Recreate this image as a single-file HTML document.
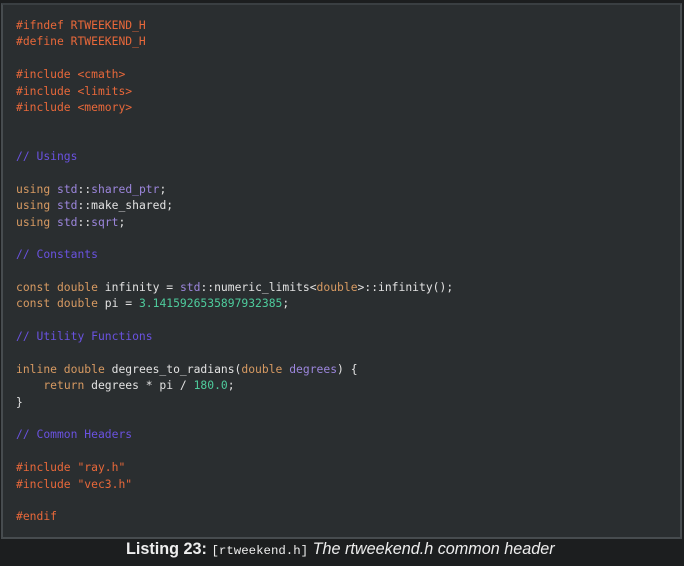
<!DOCTYPE html><html><head><style>
body{margin:0;background:#1c1e1f;width:684px;height:566px;overflow:hidden}
.box{position:absolute;left:1px;top:3px;width:677px;height:532px;background:#2a2e30;border:2px solid #474c4f;border-top-color:#3a3f42}
pre{margin:0;position:absolute;left:13px;top:12px;font:11.35px/16.37px "DejaVu Sans Mono",monospace;color:#e2e2e2}
.p{color:#e8683a}.k{color:#d79a62}.c{color:#6a52e0}.s{color:#9c86dc}.n{color:#4ecb9c}
.cap{position:absolute;top:540px;left:126px;font:16.2px "Liberation Sans",sans-serif;color:#eee;white-space:nowrap}
.cap b{font-weight:bold}.cap code{font:12.4px "Liberation Mono",monospace}.cap i{font-style:italic}
</style></head><body><div class="box"><pre><span class="p">#ifndef RTWEEKEND_H
#define RTWEEKEND_H

#include &lt;cmath&gt;
#include &lt;limits&gt;
#include &lt;memory&gt;</span>


<span class="c">// Usings</span>

<span class="k">using</span> <span class="s">std</span>::<span class="s">shared_ptr</span>;
<span class="k">using</span> <span class="s">std</span>::make_shared;
<span class="k">using</span> <span class="s">std</span>::<span class="s">sqrt</span>;

<span class="c">// Constants</span>

<span class="k">const double</span> infinity = <span class="s">std</span>::numeric_limits&lt;<span class="k">double</span>&gt;::infinity();
<span class="k">const double</span> pi = <span class="n">3.1415926535897932385</span>;

<span class="c">// Utility Functions</span>

<span class="k">inline double</span> degrees_to_radians(<span class="k">double</span> <span class="s">degrees</span>) {
    <span class="k">return</span> degrees * pi / <span class="n">180.0</span>;
}

<span class="c">// Common Headers</span>

<span class="p">#include "ray.h"
#include "vec3.h"

#endif</span></pre></div>
<div class="cap"><b>Listing 23:</b> <code>[rtweekend.h]</code> <i>The rtweekend.h common header</i></div>
</body></html>
